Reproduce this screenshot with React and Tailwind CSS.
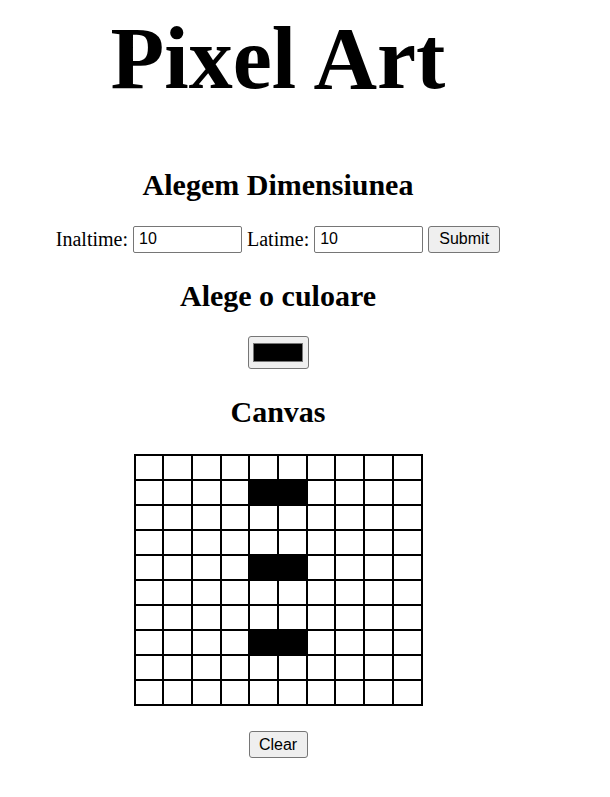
import { useState } from "react";

const ROWS = 10;
const COLS = 10;

const startFilled = new Set(["1-4", "1-5", "4-4", "4-5", "7-4", "7-5"]);

export default function App() {
  const [height, setHeight] = useState("10");
  const [width, setWidth] = useState("10");
  const [filled, setFilled] = useState(startFilled);

  const paint = (key) => {
    const next = new Set(filled);
    next.add(key);
    setFilled(next);
  };

  return (
    <div className="min-h-screen bg-white text-black font-['Liberation_Serif','Times_New_Roman',serif]">
      <div className="w-[556px] flex flex-col items-center pt-[15px] pb-10">
        <h1 className="text-[88px] font-bold leading-none">Pixel Art</h1>

        {/* Dimensiuni */}
        <h2 className="mt-[67px] text-[30px] font-bold leading-none">Alegem Dimensiunea</h2>
        <form
          className="mt-[24px] flex items-center gap-[5px] text-[20px]"
          onSubmit={(e) => e.preventDefault()}
        >
          <label>Inaltime:</label>
          <input
            value={height}
            onChange={(e) => setHeight(e.target.value)}
            className="w-[109px] h-[27px] border border-[#767676] rounded-[2px] px-[5px] text-[16px] font-['Liberation_Sans',Arial,sans-serif] outline-none"
          />
          <label>Latime:</label>
          <input
            value={width}
            onChange={(e) => setWidth(e.target.value)}
            className="w-[109px] h-[27px] border border-[#767676] rounded-[2px] px-[5px] text-[16px] font-['Liberation_Sans',Arial,sans-serif] outline-none"
          />
          <button
            type="submit"
            className="w-[72px] h-[27px] border border-[#767676] rounded-[3px] bg-[#efefef] text-[16px] font-['Liberation_Sans',Arial,sans-serif]"
          >
            Submit
          </button>
        </form>

        {/* Culoare */}
        <h2 className="mt-[27px] text-[30px] font-bold leading-none">Alege o culoare</h2>
        <button className="mt-[25px] w-[61px] h-[33px] border border-[#767676] rounded-[3px] bg-[#efefef] flex items-center justify-center">
          <span className="block w-[50px] h-[19px] border border-[#777] bg-black" />
        </button>

        {/* Canvas */}
        <h2 className="mt-[28px] text-[30px] font-bold leading-none">Canvas</h2>
        <div className="mt-[27px] w-[289px] grid grid-cols-10 gap-[2px] p-[2px] bg-black">
          {Array.from({ length: ROWS * COLS }, (_, i) => {
            const key = `${Math.floor(i / COLS)}-${i % COLS}`;
            return (
              <div
                key={key}
                onClick={() => paint(key)}
                className={"h-[23px] " + (filled.has(key) ? "bg-black" : "bg-white")}
              />
            );
          })}
        </div>

        <button
          onClick={() => setFilled(new Set())}
          className="mt-[25px] w-[59px] h-[27px] border border-[#767676] rounded-[3px] bg-[#efefef] text-[16px] font-['Liberation_Sans',Arial,sans-serif]"
        >
          Clear
        </button>
      </div>
    </div>
  );
}
